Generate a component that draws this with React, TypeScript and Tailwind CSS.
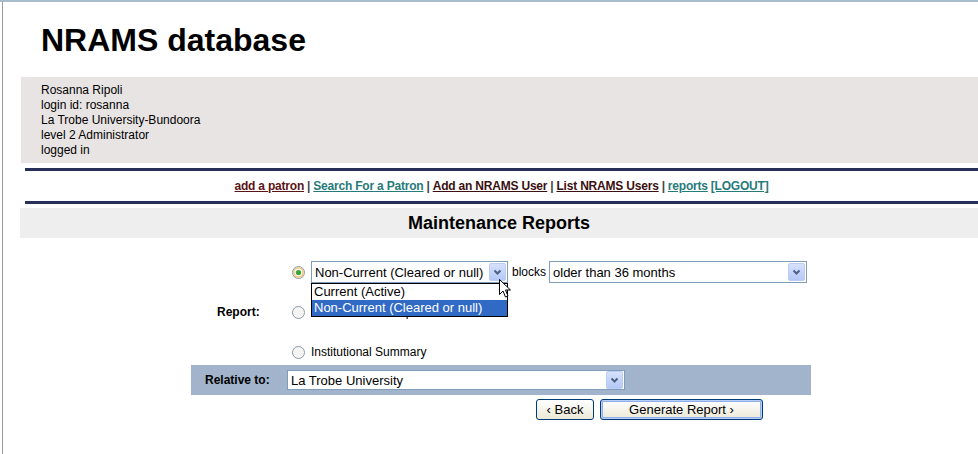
import React from 'react';

const font = { fontFamily: '"Liberation Sans", Arial, sans-serif' };

function Chevron() {
  return (
    <svg width="9" height="7" viewBox="0 0 9 7">
      <path d="M1.5 1.5 L4.5 4.5 L7.5 1.5" fill="none" stroke="#4d6185" strokeWidth="2" />
    </svg>
  );
}

function XpSelect({ value, width, children }: { value: string; width: string; children?: React.ReactNode }) {
  return (
    <div className={`relative h-[22px] ${width} border border-[#7f9db9] bg-white flex items-center`}>
      <span className="flex-1 pl-[3px] text-[13px] text-black leading-none whitespace-nowrap">{value}</span>
      <span className="mr-[1px] w-[17px] h-[18px] rounded-[2px] border border-[#bccdf5] bg-gradient-to-b from-[#d6e1fc] to-[#b4c8f6] flex items-center justify-center">
        <Chevron />
      </span>
      {children}
    </div>
  );
}

function Radio({ checked }: { checked?: boolean }) {
  return (
    <svg width="13" height="13" viewBox="0 0 13 13" className="shrink-0">
      <circle cx="6.5" cy="6.5" r="6" fill="#f4f4f0" stroke="#8a99aa" strokeWidth="1" />
      {checked && <circle cx="6.5" cy="6.5" r="4.6" fill="none" stroke="#f5c36a" strokeWidth="1.3" />}
      {checked && <circle cx="6.5" cy="6.5" r="2.6" fill="#3aa63a" />}
    </svg>
  );
}

function XpButton({ label, focused, width }: { label: string; focused?: boolean; width: string }) {
  return (
    <button
      className={`${width} h-[21px] rounded-[3px] border border-[#003c74] bg-gradient-to-b from-white to-[#ece9d8] text-[13px] text-black leading-none flex items-center justify-center ${focused ? 'shadow-[inset_0_0_0_1px_#b6cdf7,inset_0_0_0_2px_#8fb0ea]' : ''}`}
      style={font}
    >
      {label}
    </button>
  );
}

export default function App() {
  return (
    <div className="w-[978px] h-[454px] bg-white border-t-2 border-[#a8bccd] overflow-hidden" style={font}>
      <div className="ml-[2px] h-full border-l border-[#9c9c9c]">
        {/* Title */}
        <h1 className="pt-[20px] pl-[38px] text-[32px] leading-[36px] font-bold text-black">NRAMS database</h1>

        {/* User info */}
        <div className="mt-[19px] ml-[18px] bg-[#e8e4e4] pl-[20px] pt-[6px] pb-[5px] text-[12px] leading-[15px] text-black">
          <div>Rosanna Ripoli</div>
          <div>login id: rosanna</div>
          <div>La Trobe University-Bundoora</div>
          <div>level 2 Administrator</div>
          <div>logged in</div>
        </div>

        {/* Nav */}
        <div className="mt-[5px] ml-[22px]">
          <div className="h-[3px] bg-[#283058]" />
          <div className="h-[30px] flex items-center justify-center text-[12px] font-bold tracking-[-0.2px] text-[#444]">
            <a className="underline text-[#5a1414]">add a patron</a>
            <span className="mx-[3px]">|</span>
            <a className="underline text-[#277a7a]">Search For a Patron</a>
            <span className="mx-[3px]">|</span>
            <a className="underline text-[#3a1010]">Add an NRAMS User</a>
            <span className="mx-[3px]">|</span>
            <a className="underline text-[#3a1010]">List NRAMS Users</a>
            <span className="mx-[3px]">|</span>
            <a className="underline text-[#277a7a]">reports</a>
            <a className="ml-[3px] underline text-[#277a7a]">[LOGOUT]</a>
          </div>
          <div className="h-[3px] bg-[#283058]" />
        </div>

        {/* Section header */}
        <div className="mt-[4px] ml-[17px] h-[30px] bg-[#eeeeee] flex items-center justify-center">
          <span className="text-[18px] font-bold text-black">Maintenance Reports</span>
        </div>

        {/* Form */}
        <div className="ml-[188px] w-[620px] pt-[14px]">
          <div className="h-[40px] flex items-center">
            <div className="w-[101px]" />
            <Radio checked />
            <div className="ml-[6px]">
              <XpSelect value="Non-Current (Cleared or null)" width="w-[197px]">
                <div className="absolute left-[-1px] top-[21px] w-[197px] border border-black bg-white text-[13px] leading-[16px] z-10">
                  <div className="pl-[2px] h-[16px] text-black">Current (Active)</div>
                  <div className="pl-[2px] h-[16px] bg-[#316ac5] text-white">Non-Current (Cleared or null)</div>
                </div>
                <svg className="absolute left-[187px] top-[17px] z-20" width="13" height="20" viewBox="0 0 13 20">
                  <path d="M0.5 0.5 L0.5 15.5 L4 12 L6.5 18 L9 17 L6.5 11 L11.5 11 Z" fill="white" stroke="black" strokeWidth="1" />
                </svg>
              </XpSelect>
            </div>
            <span className="ml-[4px] text-[12px] text-black">blocks</span>
            <div className="ml-[3px]">
              <XpSelect value="older than 36 months" width="w-[258px]" />
            </div>
          </div>

          <div className="h-[40px] flex items-center">
            <div className="w-[101px] pl-[26px] text-[12px] font-bold text-black">Report:</div>
            <Radio />
            <span className="ml-[6px] text-[12px] text-black">Patrons with Multiple Records</span>
          </div>

          <div className="h-[33px] pt-[7px] flex items-center">
            <div className="w-[101px]" />
            <Radio />
            <span className="ml-[6px] text-[12px] text-black">Institutional Summary</span>
          </div>

          <div className="h-[30px] bg-[#a1b4cb] flex items-center">
            <span className="w-[96px] pl-[14px] text-[12px] font-bold text-black">Relative to:</span>
            <XpSelect value="La Trobe University" width="w-[338px] !h-[20px]" />
          </div>

          <div className="mt-[4px] flex gap-[6px] pl-[345px]">
            <XpButton label="‹ Back" width="w-[58px]" />
            <XpButton label="Generate Report ›" width="w-[163px]" focused />
          </div>
        </div>
      </div>
    </div>
  );
}
